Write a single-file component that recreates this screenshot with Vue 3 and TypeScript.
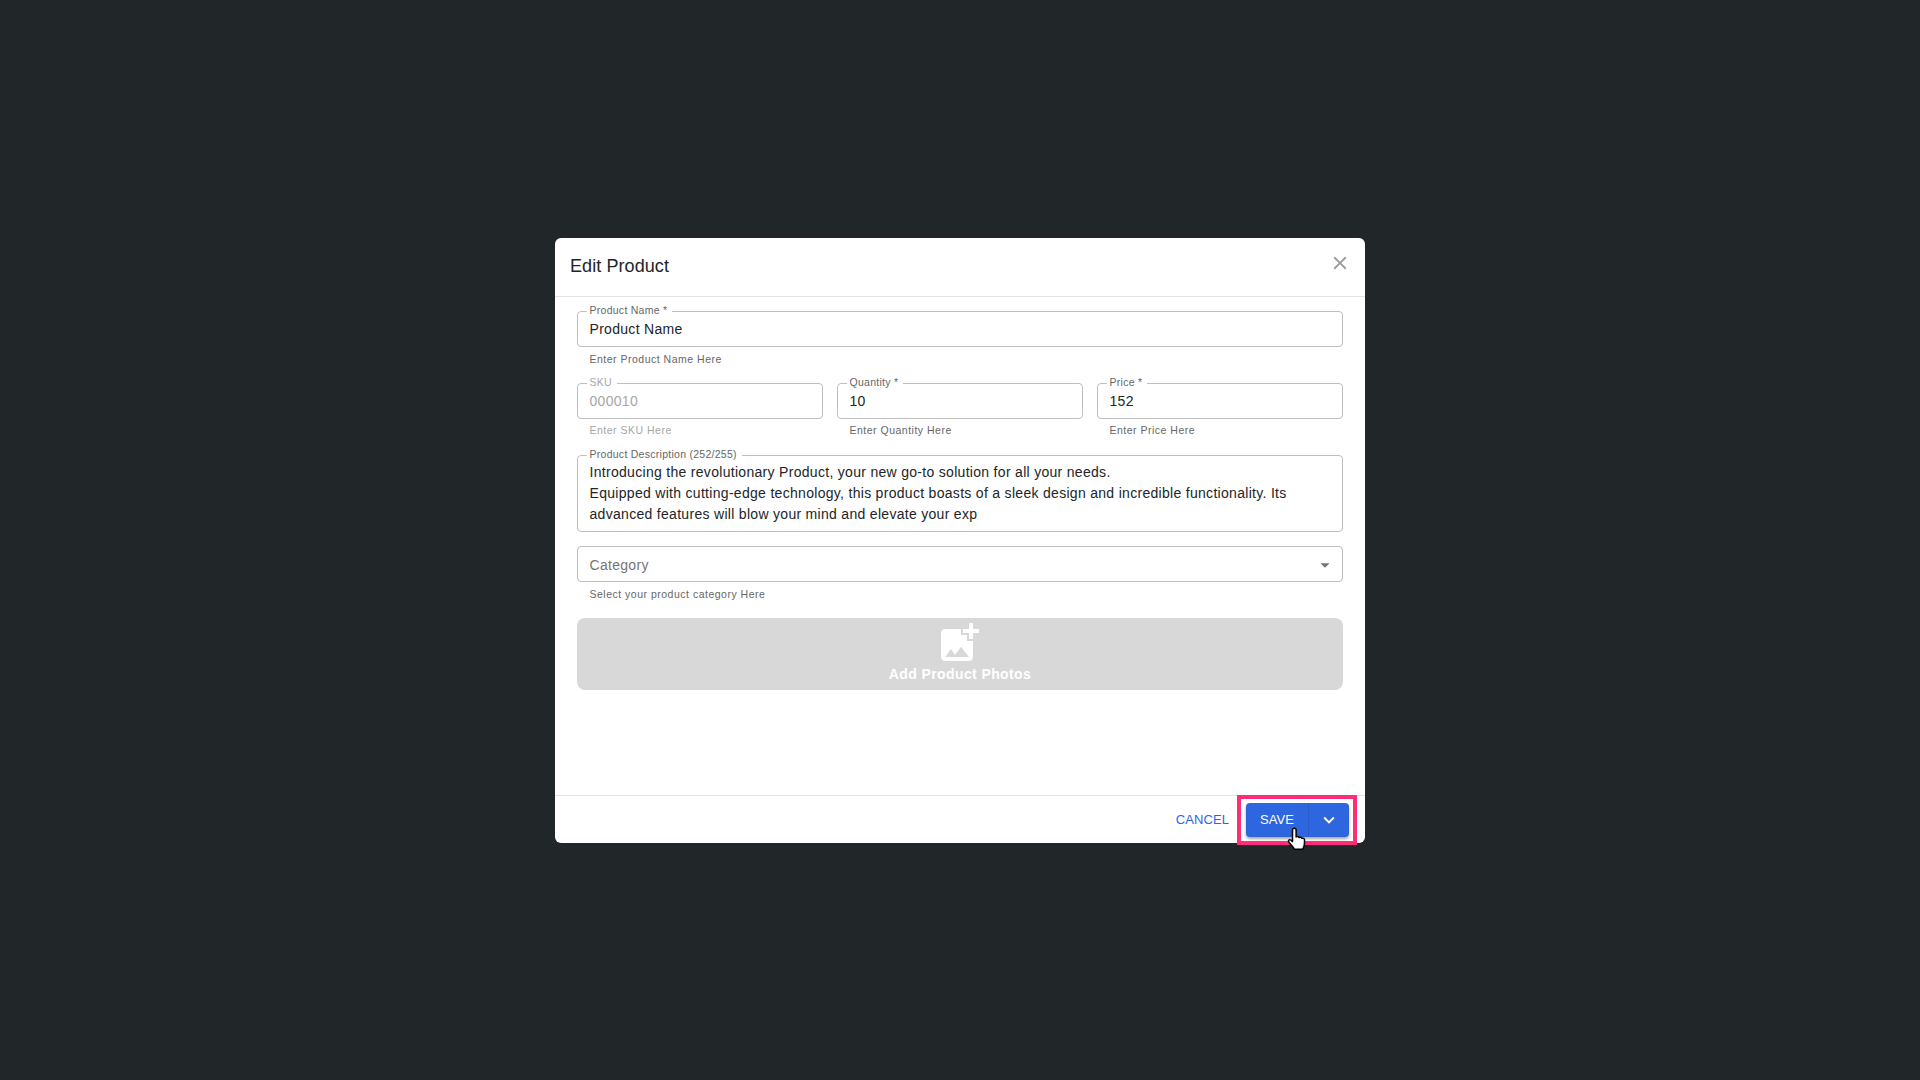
<script setup lang="ts">
interface Field { label: string; value: string; helper: string; muted?: boolean }
const rowFields: Field[] = [
  { label: 'SKU', value: '000010', helper: 'Enter SKU Here', muted: true },
  { label: 'Quantity *', value: '10', helper: 'Enter Quantity Here' },
  { label: 'Price *', value: '152', helper: 'Enter Price Here' },
]
</script>

<template>
  <div class="backdrop">
    <section class="dialog">
      <header class="head">
        <h2 class="title">Edit Product</h2>
        <svg class="close" viewBox="0 0 24 24" width="22" height="22"><path fill="currentColor" d="M19 6.41 17.59 5 12 10.59 6.41 5 5 6.41 10.59 12 5 17.59 6.41 19 12 13.41 17.59 19 19 17.59 13.41 12z" /></svg>
      </header>
      <div class="body">
        <div class="group">
          <fieldset class="box"><legend>Product Name *</legend><div class="val">Product Name</div></fieldset>
          <p class="helper">Enter Product Name Here</p>
        </div>
        <div class="row">
          <div v-for="f in rowFields" :key="f.label" class="group" :class="{ muted: f.muted }">
            <fieldset class="box"><legend>{{ f.label }}</legend><div class="val">{{ f.value }}</div></fieldset>
            <p class="helper">{{ f.helper }}</p>
          </div>
        </div>
        <fieldset class="box area">
          <legend>Product Description (252/255)</legend>
          <div class="val">Introducing the revolutionary Product, your new go-to solution for all your needs.<br />Equipped with cutting-edge technology, this product boasts of a sleek design and incredible functionality. Its advanced features will blow your mind and elevate your exp</div>
        </fieldset>
        <div class="group">
          <div class="box select">
            <span class="placeholder">Category</span>
            <svg class="caret" viewBox="0 0 24 24" width="22" height="22"><path fill="currentColor" d="M7 10l5 5 5-5z" /></svg>
          </div>
          <p class="helper">Select your product category Here</p>
        </div>
        <div class="photos">
          <svg viewBox="0 0 24 24" width="48" height="48"><path fill="#fff" d="M19 7v2.99s-1.99.01-2 0V7h-3s.01-1.99 0-2h3V2h2v3h3v2h-3zm-3 4V8h-3V5H5c-1.1 0-2 .9-2 2v12c0 1.1.9 2 2 2h12c1.1 0 2-.9 2-2v-8h-3zM5 19l3-4 2 3 3-4 4 5H5z" /></svg>
          <span class="photos-text">Add Product Photos</span>
        </div>
      </div>
      <footer class="foot">
        <span class="cancel">CANCEL</span>
        <div class="split">
          <span class="save">SAVE</span>
          <span class="more"><svg viewBox="0 0 24 24" width="22" height="22"><path fill="currentColor" d="M7.41 8.59 12 13.17l4.59-4.58L18 10l-6 6-6-6z" /></svg></span>
          <span class="highlight"></span>
          <svg class="cursor" viewBox="0 0 20 26" width="20" height="26">
            <path fill="#fff" stroke="#000" stroke-width="1.5" stroke-linejoin="round" d="M5.500 3c0-2.400 3.600-2.400 3.600 0v7c1-.7 2.500-.5 2.900.5 1-.6 2.500-.3 2.900.8 1-.4 2.500.2 2.600 1.500.2 2 .1 3.800-.3 5.500-.3 1.400-1 2.300-1.300 3.900H7.400c-.6-1.400-1.700-2.600-2.900-3.900-1.200-1.300-2.700-2.800-3-4-.3-1.400 1.200-2.100 2.300-1.300l1.700 1.600z" />
          </svg>
        </div>
      </footer>
    </section>
  </div>
</template>

<style>
html, body { margin: 0; }
</style>

<style scoped>
.backdrop {
  min-height: 100vh;
  background: #212629;
  display: flex;
  align-items: center;
  justify-content: center;
  font-family: "Liberation Sans", Arial, sans-serif;
}
.dialog {
  width: 810px;
  height: 605px;
  background: #fff;
  border-radius: 6px;
  display: flex;
  flex-direction: column;
  margin-top: 1px;
}
.head {
  height: 58px;
  box-sizing: content-box;
  border-bottom: 1px solid #e3e3e3;
  display: flex;
  justify-content: space-between;
  padding: 0 14px 0 15px;
}
.title {
  margin: 0;
  font-size: 18px;
  font-weight: 400;
  line-height: 56px;
  color: #212529;
  letter-spacing: 0.08px;
}
.close { color: #9a9a9a; margin-top: 14px; }
.body {
  flex: 1;
  padding: 14px 22px 0;
  display: flex;
  flex-direction: column;
  gap: 14px;
}
.row {
  display: grid;
  grid-template-columns: repeat(3, 1fr);
  gap: 14px;
}
.box {
  margin: 0;
  min-width: 0;
  box-sizing: border-box;
  height: 36px;
  border: 1px solid #bfbfbf;
  border-radius: 4px;
  padding: 0 11.5px;
}
.box legend {
  position: relative;
  top: -1px;
  margin-left: -3px;
  padding: 0 5px 0 3px;
  font-size: 10.5px;
  line-height: 1px;
  height: 1px;
  color: #666;
  letter-spacing: 0.27px;
}
.val {
  font-size: 14px;
  line-height: 21px;
  color: #212529;
  letter-spacing: 0.3px;
  padding-top: 7px;
}
.area { height: 77px; }
.area .val { padding-top: 6px; }
.select {
  display: flex;
  align-items: center;
  justify-content: space-between;
  padding-top: 2px;
  padding-right: 6px;
}
.placeholder { font-size: 14px; color: #757575; letter-spacing: 0.3px; }
.caret { color: #757575; }
.helper {
  margin: 0;
  height: 22px;
  padding: 4px 12px 0 12.5px;
  box-sizing: border-box;
  font-size: 10.5px;
  line-height: 16px;
  color: #666;
  letter-spacing: 0.5px;
}
.row .helper { padding-top: 3px; }
.muted .val, .muted legend, .muted .helper { color: #a6a6a6; }
.photos {
  height: 72px;
  box-sizing: border-box;
  padding-top: 1px;
  background: #d8d8d8;
  border-radius: 8px;
  display: flex;
  flex-direction: column;
  align-items: center;
}
.photos svg { display: block; margin-left: -2px; }
.photos-text {
  font-size: 14px;
  font-weight: 700;
  line-height: 14px;
  color: #fff;
  letter-spacing: 0.4px;
}
.foot {
  height: 47px;
  border-top: 1px solid #e3e3e3;
  display: flex;
  align-items: center;
  justify-content: flex-end;
  padding-right: 16px;
  gap: 17px;
}
.cancel { font-size: 13px; color: #2d66de; letter-spacing: 0.1px; }
.split {
  position: relative;
  width: 103px;
  height: 34px;
  display: flex;
  background: #2d66de;
  border-radius: 4px;
  color: #fff;
  box-shadow: 0 2px 3px rgba(0, 0, 0, 0.35);
}
.save {
  width: 62px;
  border-right: 1px solid #2a5dcb;
  font-size: 13px;
  line-height: 33px;
  text-align: center;
  letter-spacing: 0.1px;
}
.more { flex: 1; display: flex; align-items: center; justify-content: center; }
.highlight {
  position: absolute;
  left: -9px;
  right: -8px;
  top: -8px;
  bottom: -8px;
  border: 4px solid #ff2d78;
}
.cursor { position: absolute; left: 41px; top: 24px; }
</style>
